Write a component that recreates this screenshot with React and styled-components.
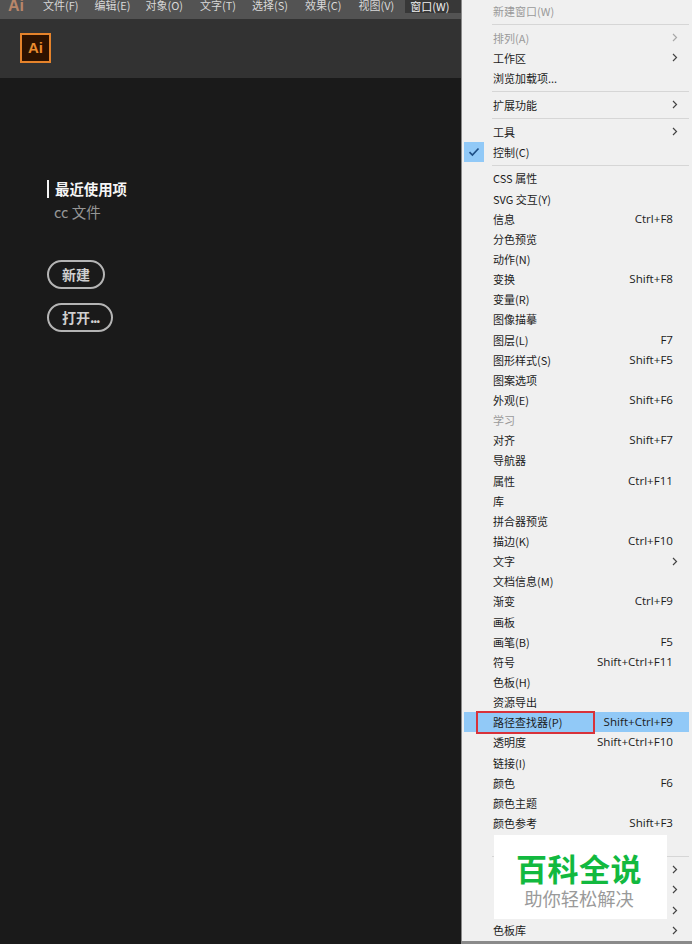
import React from 'react';
import styled, { createGlobalStyle } from 'styled-components';

const Global = createGlobalStyle`
  html, body { margin: 0; padding: 0; background: #1a1a1a; }
  body { font-family: "Liberation Sans", "Noto Sans CJK SC", sans-serif; overflow: hidden; }
`;

const Page = styled.div`
  width: 692px;
  height: 944px;
  display: flex;
  overflow: hidden;
`;
const Workspace = styled.div`
  width: 461px;
  display: flex;
  flex-direction: column;
  background: #1a1a1a;
`;
const MenuBar = styled.div`
  height: 19px;
  background: #535353;
  display: flex;
  align-items: center;
  padding-bottom: 8px;
  box-sizing: border-box;
`;
const AppMark = styled.span`
  width: 35px;
  padding-left: 8px;
  box-sizing: border-box;
  font: bold 16px "Liberation Sans", sans-serif;
  color: #b8866a;
`;
const MenuTitle = styled.span`
  font: 11px "Noto Sans CJK SC", sans-serif;
  line-height: 15px;
  white-space: nowrap;
  color: #d8d8d8;
  margin-left: ${p => p.$gap}px;
`;
const ActiveTitle = styled(MenuTitle)`
  background: #383838;
  color: #f0f0f0;
  padding: 0 5px;
  line-height: 14px;
  height: 14px;
  margin-left: 11px;
  flex: 1;
`;
const Header = styled.div`
  height: 59px;
  background: #323232;
  padding: 14px 0 0 20px;
  box-sizing: border-box;
`;
const Logo = styled.div`
  width: 31px;
  height: 30px;
  box-sizing: border-box;
  border: 2px solid #e5832b;
  background: #2d1200;
  color: #ea8c2e;
  font: bold 15px/26px "Liberation Sans", sans-serif;
  text-align: center;
`;
const Body = styled.div`
  padding: 102px 0 0 47px;
  display: flex;
  flex-direction: column;
`;
const NavActive = styled.div`
  height: 18px;
  border-left: 2px solid #f4f4f4;
  padding-left: 6px;
  font: bold 14.4px/18px "Noto Sans CJK SC", sans-serif;
  color: #f5f5f5;
`;
const NavItem = styled.div`
  margin-top: 5px;
  padding-left: 7px;
  font: 14.5px/18px "Noto Sans CJK SC", sans-serif;
  color: #969696;
`;
const Pill = styled.div`
  align-self: flex-start;
  height: 29px;
  box-sizing: border-box;
  border: 2px solid #b4b4b4;
  border-radius: 15px;
  margin-top: ${p => p.$top}px;
  padding: 0 ${p => p.$right}px 0 13px;
  font: bold 14px/25px "Noto Sans CJK SC", sans-serif;
  color: #cfcfcf;
`;
const Dots = styled.span`
  letter-spacing: -1.6px;
  margin-right: 1px;
`;

const Menu = styled.div`
  position: relative;
  width: 231px;
  height: 944px;
  box-sizing: border-box;
  background: #f0f0f0;
  border-left: 1px solid #8a8a8a;
  border-bottom: 3px solid #8a8a8a;
  padding: 1px 3px 0 2px;
`;
const Row = styled.div`
  height: 20.15px;
  display: flex;
  align-items: center;
  padding-left: 29px;
  padding-right: 16px;
  position: relative;
  font: 11px/20px "Noto Sans CJK SC", sans-serif;
  color: ${p => (p.$disabled ? '#9a9a9a' : '#1c1c1c')};
  background: ${p => (p.$hover ? '#91c9f7' : 'transparent')};
`;
const Label = styled.span`
  flex: 1;
  white-space: nowrap;
`;
const Shortcut = styled.span`
  white-space: nowrap;
  font-family: "Open Sans", "Liberation Sans", sans-serif;
  font-size: 11.6px;
`;
const Arrow = styled.svg`
  width: 6px;
  height: 9px;
  margin-right: -5px;
  fill: none;
  stroke: ${p => (p.$disabled ? '#a8a8a8' : '#444')};
  stroke-width: 1.2;
`;
const CheckBox = styled.span`
  position: absolute;
  left: 0;
  top: 0;
  width: 20px;
  height: 20px;
  background: #91c9f7;
  display: flex;
  align-items: center;
  justify-content: center;
`;
const Sep = styled.div`
  height: 1px;
  background: #d6d6d6;
  margin: 3px 0 2.6px 28px;
`;
const RedBox = styled.div`
  position: absolute;
  left: 14px;
  top: 711px;
  width: 119px;
  height: 23px;
  box-sizing: border-box;
  border: 2px solid #d8323a;
`;
const Watermark = styled.div`
  position: absolute;
  left: 32px;
  top: 835px;
  width: 173px;
  height: 84px;
  padding: 15px 3px 0 0;
  background: #fff;
  display: flex;
  flex-direction: column;
  align-items: center;
  box-sizing: border-box;
`;
const WmTitle = styled.div`
  font: bold 31px/36px "Noto Sans CJK SC", sans-serif;
  color: #12b93f;
  letter-spacing: 0.5px;
`;
const WmSub = styled.div`
  font: 18.3px/24px "Noto Sans CJK SC", sans-serif;
  color: #9a9a9a;
`;

const titles = [
  ['文件(F)', 8], ['编辑(E)', 16], ['对象(O)', 15], ['文字(T)', 17],
  ['选择(S)', 16], ['效果(C)', 17], ['视图(V)', 17],
];

const sections = [
  [{ t: '新建窗口(W)', d: 1 }],
  [{ t: '排列(A)', d: 1, a: 1 }, { t: '工作区', a: 1 }, { t: '浏览加载项...' }],
  [{ t: '扩展功能', a: 1 }],
  [{ t: '工具', a: 1 }, { t: '控制(C)', c: 1 }],
  [
    { t: 'CSS 属性' }, { t: 'SVG 交互(Y)' }, { t: '信息', s: 'Ctrl+F8' }, { t: '分色预览' },
    { t: '动作(N)' }, { t: '变换', s: 'Shift+F8' }, { t: '变量(R)' }, { t: '图像描摹' },
    { t: '图层(L)', s: 'F7' }, { t: '图形样式(S)', s: 'Shift+F5' }, { t: '图案选项' },
    { t: '外观(E)', s: 'Shift+F6' }, { t: '学习', d: 1 }, { t: '对齐', s: 'Shift+F7' },
    { t: '导航器' }, { t: '属性', s: 'Ctrl+F11' }, { t: '库' }, { t: '拼合器预览' },
    { t: '描边(K)', s: 'Ctrl+F10' }, { t: '文字', a: 1 }, { t: '文档信息(M)' },
    { t: '渐变', s: 'Ctrl+F9' }, { t: '画板' }, { t: '画笔(B)', s: 'F5' },
    { t: '符号', s: 'Shift+Ctrl+F11' }, { t: '色板(H)' }, { t: '资源导出' },
    { t: '路径查找器(P)', s: 'Shift+Ctrl+F9', h: 1 }, { t: '透明度', s: 'Shift+Ctrl+F10' },
    { t: '链接(I)' }, { t: '颜色', s: 'F6' }, { t: '颜色主题' }, { t: '颜色参考', s: 'Shift+F3' },
    { blank: 1 },
  ],
  [{ blank: 1, a: 1 }, { blank: 2, a: 1 }, { blank: 3, a: 1 }, { t: '色板库', a: 1 }],
];

function MenuRow({ item }) {
  return (
    <Row $disabled={item.d} $hover={item.h}>
      {item.c && (
        <CheckBox>
          <svg width="12" height="10" viewBox="0 0 12 10" fill="none" stroke="#1f4f86" strokeWidth="1.7">
            <path d="M1.5 5.2 4.4 8 10.5 1.5" />
          </svg>
        </CheckBox>
      )}
      <Label>{item.t}</Label>
      {item.s && <Shortcut>{item.s}</Shortcut>}
      {item.a && (
        <Arrow $disabled={item.d} viewBox="0 0 6 9"><path d="M1 1l3.5 3.5L1 8" /></Arrow>
      )}
    </Row>
  );
}

export default function App() {
  return (
    <Page>
      <Global />
      <Workspace>
        <MenuBar>
          <AppMark>Ai</AppMark>
          {titles.map(([t, g]) => <MenuTitle key={t} $gap={g}>{t}</MenuTitle>)}
          <ActiveTitle>窗口(W)</ActiveTitle>
        </MenuBar>
        <Header><Logo>Ai</Logo></Header>
        <Body>
          <NavActive>最近使用项</NavActive>
          <NavItem>cc 文件</NavItem>
          <Pill $top={39} $right={13}>新建</Pill>
          <Pill $top={14} $right={11}>打开<Dots>...</Dots></Pill>
        </Body>
      </Workspace>
      <Menu>
        {sections.map((sec, i) => (
          <React.Fragment key={i}>
            {i > 0 && <Sep />}
            {sec.map((item, j) => <MenuRow key={j} item={item} />)}
          </React.Fragment>
        ))}
        <RedBox />
        <Watermark>
          <WmTitle>百科全说</WmTitle>
          <WmSub>助你轻松解决</WmSub>
        </Watermark>
      </Menu>
    </Page>
  );
}
